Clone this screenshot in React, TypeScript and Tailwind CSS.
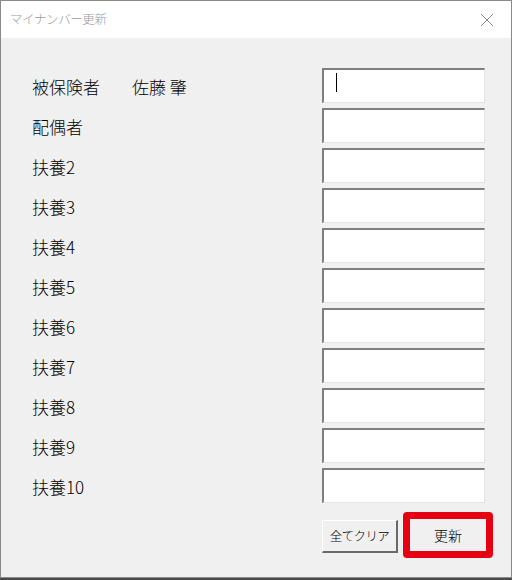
import * as React from "react";

const rows = [
  "被保険者",
  "配偶者",
  "扶養2",
  "扶養3",
  "扶養4",
  "扶養5",
  "扶養6",
  "扶養7",
  "扶養8",
  "扶養9",
  "扶養10",
];

const uiFont = { fontFamily: '"Noto Sans CJK JP", "Noto Sans", sans-serif' };

function NumberBox({ focused }: { focused?: boolean }) {
  return (
    <div className="relative w-[163px] h-[35px] bg-white border-t-2 border-l-2 border-r border-b border-t-[#7f7f7f] border-l-[#7f7f7f] border-r-[#e3e3e3] border-b-[#e3e3e3]">
      {focused && <span className="absolute left-[12px] top-[3px] w-px h-[19px] bg-black" />}
    </div>
  );
}

export default function App() {
  return (
    <div className="w-[512px] h-[580px] bg-[#4a4a4a] overflow-hidden" style={uiFont}>
      <div className="w-[512px] h-[578px] border border-[#8a8a8a] bg-[#f0f0f0] flex flex-col">
        {/* title bar */}
        <div className="h-[37px] bg-white flex items-center justify-between pl-[9px] pr-[14px]">
          <span className="text-[12.5px] font-light text-[#9a9a9a] tracking-[-0.4px]">マイナンバー更新</span>
          <svg width="14" height="14" viewBox="0 0 14 14" className="mr-[3px]">
            <path d="M1 1 L13 13 M13 1 L1 13" stroke="#8a8a8a" strokeWidth="1" fill="none" />
          </svg>
        </div>

        {/* rows */}
        <div className="flex flex-col gap-[5px] pt-[30px]">
          {rows.map((label, i) => (
            <div key={label} className="flex items-center h-[35px]">
              <div className="w-[321px] pl-[31px] flex items-center text-[17px] font-light text-black leading-none pt-[2px]">
                <span className="w-[100px]">{label}</span>
                {i === 0 && <span>佐藤 肇</span>}
              </div>
              <NumberBox focused={i === 0} />
            </div>
          ))}
        </div>

        {/* buttons */}
        <div className="flex items-start gap-[5px] pl-[321px] mt-[9px]">
          <button className="mt-[8px] w-[76px] h-[33px] bg-[#f0f0f0] border-t border-l border-t-white border-l-white border-r-2 border-b-2 border-r-[#6a6a6a] border-b-[#6a6a6a] text-[12.5px] font-light text-black tracking-[-0.6px] flex items-center justify-center">
            全てクリア
          </button>
          <div className="w-[90px] h-[46px] rounded-[4px] bg-[#e50012] p-[7px]">
            <button className="w-full h-full bg-[#f0f0f0] text-[14px] font-light text-black flex items-center justify-center">
              更新
            </button>
          </div>
        </div>
      </div>
    </div>
  );
}
